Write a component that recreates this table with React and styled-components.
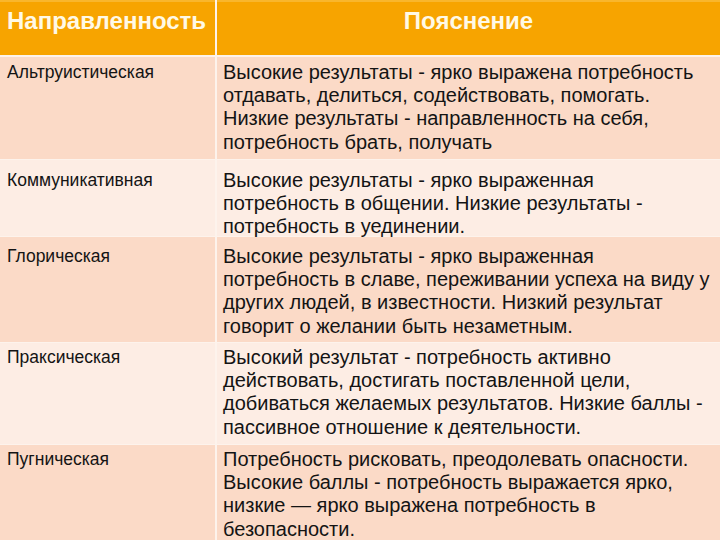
import { Fragment } from 'react';
import styled, { createGlobalStyle } from 'styled-components';

const GlobalStyle = createGlobalStyle`
  html, body {
    margin: 0;
    padding: 0;
    width: 720px;
    height: 540px;
    overflow: hidden;
    background: #ffffff;
  }
`;

const Table = styled.div`
  width: 720px;
  display: grid;
  grid-template-columns: 215px 1fr;
  column-gap: 2px;
  row-gap: 1px;
  background: #fdf3ec;
  font-family: "Liberation Sans", Arial, sans-serif;
  color: #141414;
`;

const HeadCell = styled.div`
  height: 55px;
  margin-bottom: 1px;
  background: #f7a400;
  border-top: 2px solid #f9b62c;
  box-sizing: border-box;
  padding: 5px 7px 0;
  font-size: 24px;
  font-weight: bold;
  color: #fff9e6;
  text-align: ${p => (p.$center ? 'center' : 'left')};
`;

const Cell = styled.div`
  box-sizing: border-box;
  height: ${p => p.$h}px;
  padding-top: ${p => p.$pt}px;
  background: ${p => (p.$light ? '#fdede4' : '#fbdac7')};
`;

const Name = styled(Cell)`
  padding-left: 7px;
  font-size: 17.5px;
  line-height: 23px;
`;

const Text = styled(Cell)`
  padding-left: 6px;
  font-size: 20px;
  line-height: 23.2px;
  white-space: nowrap;
`;

const Line = styled.div``;

const rows = [
  {
    name: 'Альтруистическая',
    h: 102, pt: 4,
    lines: [
      'Высокие результаты - ярко выражена потребность',
      'отдавать, делиться, содействовать, помогать.',
      'Низкие результаты - направленность на себя,',
      'потребность брать, получать',
    ],
  },
  {
    name: 'Коммуникативная',
    h: 76, pt: 9, light: true,
    lines: [
      'Высокие результаты - ярко выраженная',
      'потребность в общении. Низкие результаты -',
      'потребность в уединении.',
    ],
  },
  {
    name: 'Глорическая',
    h: 105, pt: 8,
    lines: [
      'Высокие результаты - ярко выраженная',
      'потребность в славе, переживании успеха на виду у',
      'других людей, в известности. Низкий результат',
      'говорит о желании быть незаметным.',
    ],
  },
  {
    name: 'Праксическая',
    h: 101, pt: 3, light: true,
    lines: [
      'Высокий результат - потребность активно',
      'действовать, достигать поставленной цели,',
      'добиваться желаемых результатов. Низкие баллы -',
      'пассивное отношение к деятельности.',
    ],
  },
  {
    name: 'Пугническая',
    h: 110, pt: 3,
    lines: [
      'Потребность рисковать, преодолевать опасности.',
      'Высокие баллы - потребность выражается ярко,',
      'низкие — ярко выражена потребность в',
      'безопасности.',
    ],
  },
];

export default function App() {
  return (
    <>
      <GlobalStyle />
      <Table>
        <HeadCell>Направленность</HeadCell>
        <HeadCell $center>Пояснение</HeadCell>
        {rows.map(r => (
          <Fragment key={r.name}>
            <Name $h={r.h} $pt={r.pt} $light={r.light}>{r.name}</Name>
            <Text $h={r.h} $pt={r.pt} $light={r.light}>
              {r.lines.map(l => <Line key={l}>{l}</Line>)}
            </Text>
          </Fragment>
        ))}
      </Table>
    </>
  );
}
